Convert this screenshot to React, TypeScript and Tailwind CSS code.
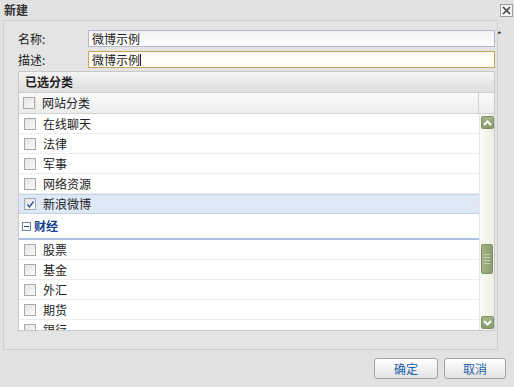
import React from 'react';

const rowsTop = ['在线聊天', '法律', '军事', '网络资源'];
const rowsFinance = ['股票', '基金', '外汇', '期货', '银行'];

export default function App() {
  return (
    <div
      className="w-[514px] h-[387px] bg-[#e2e2e2] flex flex-col overflow-hidden text-[12px] text-[#222]"
      style={{ fontFamily: '"Noto Sans CJK SC", "Liberation Sans", sans-serif' }}
    >
      {/* Title bar */}
      <div className="h-[20px] flex items-center justify-between pl-[4px] pr-[1px]">
        <span className="font-bold text-[12px] leading-none text-[#333]">新建</span>
        <div className="w-[13px] h-[13px] border border-[#a0a0a0] bg-[#f4f4f4] flex items-center justify-center">
          <svg width="9" height="9" viewBox="0 0 9 9">
            <path d="M1 1 L8 8 M8 1 L1 8" stroke="#444" strokeWidth="1.6" />
          </svg>
        </div>
      </div>

      {/* Body */}
      <div className="ml-[3px] w-[495px] h-[330px] border border-[#cfcfcf] bg-[#e4e4e4] pl-[14px] pt-[9px] flex flex-col">
        <FormRow label="名称:" value="微博示例" required />
        <div className="h-[4px]" />
        <FormRow label="描述:" value="微博示例" focused />

        {/* Grid */}
        <div className="mt-[3px] w-[477px] h-[260px] border border-[#c9c9c9] bg-white flex flex-col">
          <div className="h-[21px] flex items-center pl-[6px] font-bold text-[#222] bg-gradient-to-b from-[#f4f4f4] to-[#dedede] border-b border-[#cfcfcf]">
            已选分类
          </div>
          <div className="h-[21px] flex bg-gradient-to-b from-[#fafafa] to-[#ececec] border-b border-[#d4d4d4]">
            <div className="w-[17px] flex items-center justify-end border-r border-[#e2e2e2]">
              <CheckBox />
            </div>
            <div className="flex-1 flex items-center pl-[6px] border-r border-[#d0d0d0]">网站分类</div>
            <div className="w-[15px]" />
          </div>
          <div className="flex-1 flex min-h-0">
            <div className="flex-1 flex flex-col overflow-hidden">
              {rowsTop.map((r) => (
                <Row key={r} label={r} />
              ))}
              <Row label="新浪微博" checked selected />
              <div className="h-[26px] shrink-0 flex items-center pl-[3px] border-b-2 border-[#a9c1e2] text-[#15428b] font-bold gap-[3px]">
                <svg width="9" height="9" viewBox="0 0 9 9">
                  <rect x="0.5" y="0.5" width="8" height="8" fill="#fff" stroke="#6f87a8" />
                  <path d="M2 4.5 H7" stroke="#15428b" strokeWidth="1" />
                </svg>
                <span>财经</span>
              </div>
              {rowsFinance.map((r) => (
                <Row key={r} label={r} />
              ))}
            </div>
            <ScrollBar />
          </div>
        </div>
      </div>

      {/* Footer */}
      <div className="flex justify-end gap-[6px] pr-[8px] pt-[8px]">
        <Btn label="确定" w="w-[64px]" />
        <Btn label="取消" w="w-[62px]" />
      </div>
    </div>
  );
}

function FormRow({
  label,
  value,
  required,
  focused,
}: {
  label: string;
  value: string;
  required?: boolean;
  focused?: boolean;
}) {
  return (
    <div className="flex items-center h-[17px] relative">
      <span className="w-[70px]">{label}</span>
      <div
        className={
          focused
            ? 'w-[407px] h-[17px] border border-[#c9a15a] bg-[#fffdf6] flex items-center pl-[3px]'
            : 'w-[407px] h-[17px] border border-[#b5b8c8] bg-gradient-to-b from-[#f2f2f2] to-white flex items-center pl-[3px]'
        }
      >
        {value}
        {focused && <span className="w-px h-[12px] bg-[#222]" />}
      </div>
      {required && <span className="absolute left-[479px] top-0 text-[10px] leading-none">*</span>}
    </div>
  );
}

function CheckBox({ checked }: { checked?: boolean }) {
  return (
    <div className="w-[12px] h-[12px] border border-[#a9a9a9] bg-gradient-to-br from-[#e4e4e4] to-[#fafafa] flex items-center justify-center">
      {checked && (
        <svg width="9" height="9" viewBox="0 0 9 9">
          <path d="M1.5 4.5 L3.5 7 L7.5 1.5" stroke="#2a4f9a" strokeWidth="1.3" fill="none" />
        </svg>
      )}
    </div>
  );
}

function Row({ label, checked, selected }: { label: string; checked?: boolean; selected?: boolean }) {
  return (
    <div
      className={
        selected
          ? 'h-[20px] shrink-0 flex items-center bg-[#dfe8f6] border-y border-[#c6d3e6]'
          : 'h-[20px] shrink-0 flex items-center border-b border-[#ededed]'
      }
    >
      <div className="w-[17px] flex justify-end">
        <CheckBox checked={checked} />
      </div>
      <span className="pl-[7px]">{label}</span>
    </div>
  );
}

function ScrollBar() {
  return (
    <div className="w-[15px] flex flex-col items-center pt-[2px] pb-[1px] bg-gradient-to-r from-[#fbfbf6] to-[#eceee3] border-l border-[#e6e6e6]">
      <Arrow dir="up" />
      <div className="h-[115px]" />
      <div className="w-[12px] h-[30px] rounded-[2px] bg-gradient-to-r from-[#a3b38b] to-[#8aa06d] border border-[#7e9263] flex flex-col items-center justify-center gap-[2px]">
        <span className="w-[6px] h-px bg-[#c5d2b1]" />
        <span className="w-[6px] h-px bg-[#c5d2b1]" />
        <span className="w-[6px] h-px bg-[#c5d2b1]" />
        <span className="w-[6px] h-px bg-[#c5d2b1]" />
      </div>
      <div className="flex-1" />
      <Arrow dir="down" />
    </div>
  );
}

function Arrow({ dir }: { dir: 'up' | 'down' }) {
  return (
    <div className="w-[13px] h-[13px] rounded-[2px] bg-gradient-to-b from-[#a5b58d] to-[#869c69] border border-[#7e9263] flex items-center justify-center">
      <svg width="9" height="6" viewBox="0 0 9 6">
        <path
          d={dir === 'up' ? 'M1 5 L4.5 1.5 L8 5' : 'M1 1 L4.5 4.5 L8 1'}
          stroke="#fff"
          strokeWidth="2"
          fill="none"
        />
      </svg>
    </div>
  );
}

function Btn({ label, w }: { label: string; w: string }) {
  return (
    <div
      className={`${w} h-[21px] rounded-[3px] border border-[#a4a4a4] bg-gradient-to-b from-[#ffffff] to-[#e2e2e2] flex items-center justify-center text-[#1d5fa6]`}
    >
      {label}
    </div>
  );
}
